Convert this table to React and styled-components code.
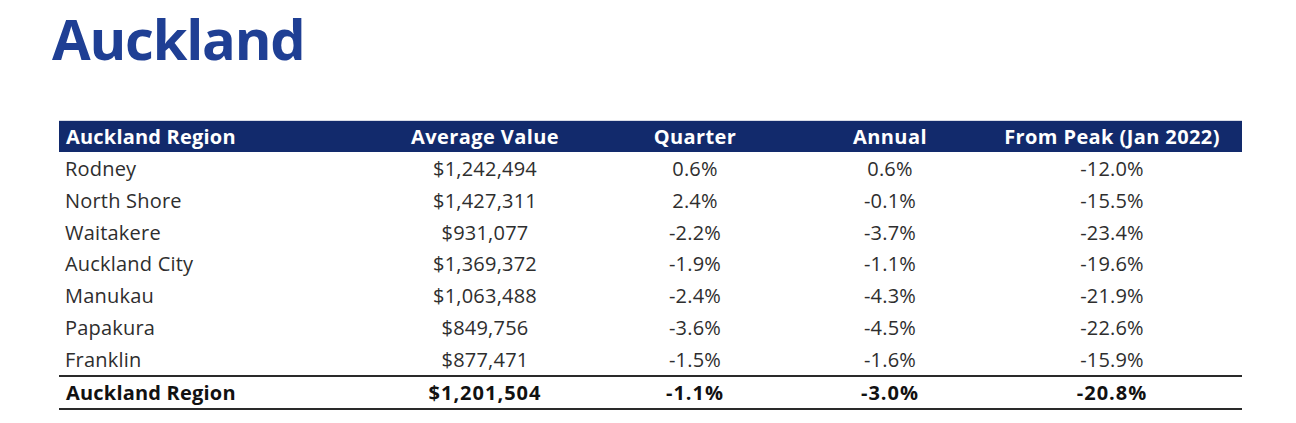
import React from "react";
import styled, { createGlobalStyle } from "styled-components";

const Global = createGlobalStyle`
  html, body { margin: 0; padding: 0; background: #ffffff; }
  body { font-family: "Open Sans", "Liberation Sans", sans-serif; }
`;

const Page = styled.div`
  width: 1296px;
  height: 423px;
  box-sizing: border-box;
  padding: 0 54px 0 52px;
  background: #fff;
  overflow: hidden;
`;

const Title = styled.h1`
  margin: 0;
  height: 120px;
  padding-top: 0;
  box-sizing: border-box;
  font-family: "Open Sans", sans-serif;
  font-weight: 700;
  font-size: 56px;
  line-height: 76px;
  letter-spacing: -1.2px;
  color: #1f3f94;
`;

const Table = styled.div`
  margin-left: 7px;
  width: 1183px;
  display: grid;
  grid-template-columns: 319px 214px 206px 184px 260px;
  border-top: 1px solid #d8dbe6;
`;

const HeadCell = styled.div`
  height: 31px;
  background: #122a6c;
  color: #ffffff;
  font-weight: 700;
  font-size: 20px;
  line-height: 31px;
  letter-spacing: ${(p) => (p.$left ? "0.2px" : "0.4px")};
  text-align: ${(p) => (p.$left ? "left" : "center")};
  padding-left: ${(p) => (p.$left ? "7px" : "0")};
  white-space: nowrap;
`;

const Cell = styled.div`
  height: ${(p) => (p.$total ? "31px" : "31.8px")};
  font-size: 20px;
  line-height: ${(p) => (p.$total ? "31px" : "33px")};
  color: ${(p) => (p.$total ? "#111" : "#2e2e2e")};
  font-weight: ${(p) => (p.$total ? 700 : 400)};
  letter-spacing: ${(p) => (p.$total ? (p.$left ? "0.2px" : "1px") : "0.2px")};
  text-align: ${(p) => (p.$left ? "left" : "center")};
  padding-left: ${(p) => (p.$left ? (p.$total ? "7px" : "6px") : "0")};
  white-space: nowrap;
  overflow: hidden;
  box-sizing: content-box;
  border-top: ${(p) => (p.$total ? "2px solid #2a2a2a" : "none")};
  border-bottom: ${(p) => (p.$total ? "2px solid #2a2a2a" : "none")};
`;

const headers = ["Auckland Region", "Average Value", "Quarter", "Annual", "From Peak (Jan 2022)"];

const rows = [
  ["Rodney", "$1,242,494", "0.6%", "0.6%", "-12.0%"],
  ["North Shore", "$1,427,311", "2.4%", "-0.1%", "-15.5%"],
  ["Waitakere", "$931,077", "-2.2%", "-3.7%", "-23.4%"],
  ["Auckland City", "$1,369,372", "-1.9%", "-1.1%", "-19.6%"],
  ["Manukau", "$1,063,488", "-2.4%", "-4.3%", "-21.9%"],
  ["Papakura", "$849,756", "-3.6%", "-4.5%", "-22.6%"],
  ["Franklin", "$877,471", "-1.5%", "-1.6%", "-15.9%"],
];

const total = ["Auckland Region", "$1,201,504", "-1.1%", "-3.0%", "-20.8%"];

export default function App() {
  return (
    <Page>
      <Global />
      <Title>Auckland</Title>
      <Table>
        {headers.map((h, i) => (
          <HeadCell key={h} $left={i === 0}>{h}</HeadCell>
        ))}
        {rows.map((r) =>
          r.map((c, i) => (
            <Cell key={r[0] + i} $left={i === 0}>{c}</Cell>
          ))
        )}
        {total.map((c, i) => (
          <Cell key={"t" + i} $left={i === 0} $total>{c}</Cell>
        ))}
      </Table>
    </Page>
  );
}
